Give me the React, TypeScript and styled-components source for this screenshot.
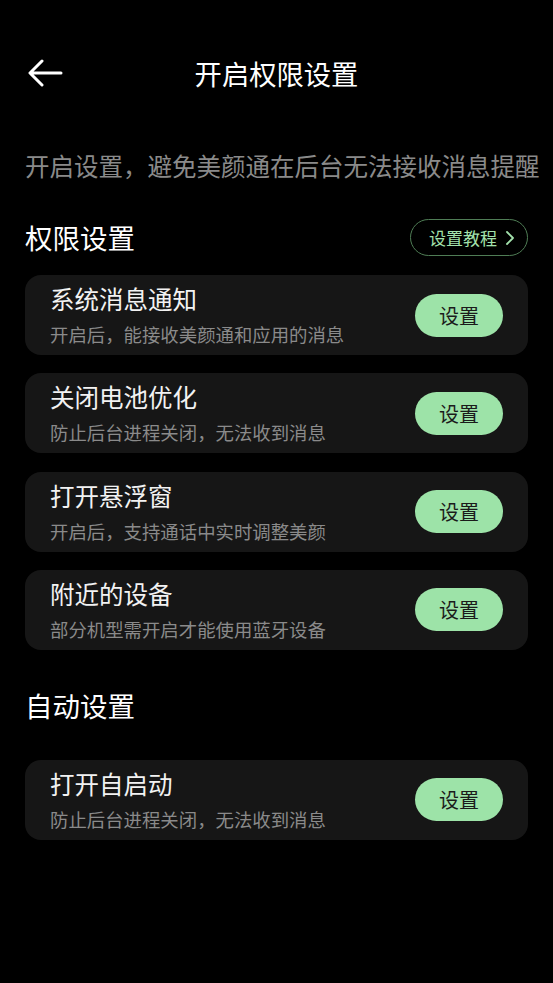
import React from "react";
import styled, { createGlobalStyle } from "styled-components";

const GlobalStyle = createGlobalStyle`
  html, body { margin: 0; padding: 0; background: #000; }
  body { font-family: "Noto Sans CJK SC", "Noto Sans", sans-serif; }
`;

const Page = styled.div`
  width: 553px;
  min-height: 983px;
  background: #000;
  display: flex;
  flex-direction: column;
  padding: 40px 25px 0;
  box-sizing: border-box;
`;

const NavBar = styled.div`
  height: 66px;
  position: relative;
  display: flex;
  align-items: center;
  justify-content: center;
`;

const BackButton = styled.button`
  position: absolute;
  left: 2px;
  top: 50%;
  transform: translateY(-50%);
  background: none;
  border: none;
  padding: 0;
  display: flex;
  width: 36px;
  height: 28px;
`;

const Title = styled.h1`
  margin: 0;
  font-size: 27.3px;
  font-weight: 400;
  color: #fff;
  line-height: 36px;
`;

const Intro = styled.p`
  margin: 43px 0 0;
  font-size: 24.5px;
  line-height: 34px;
  color: #8a8a8a;
  white-space: nowrap;
`;

const SectionRow = styled.div<{ $mt: number }>`
  margin-top: ${(p) => p.$mt}px;
  height: 37px;
  display: flex;
  align-items: center;
  justify-content: space-between;
`;

const SectionTitle = styled.h2`
  margin: 0;
  font-size: 27.5px;
  font-weight: 400;
  color: #fff;
  line-height: 37px;
`;

const TutorialButton = styled.button`
  height: 37px;
  box-sizing: border-box;
  border: 1px solid #4f7d55;
  border-radius: 19px;
  background: transparent;
  color: #a3e2ac;
  font-family: inherit;
  font-size: 17px;
  padding: 0 12px 0 18px;
  display: flex;
  align-items: center;
  gap: 8px;
`;

const CardList = styled.div<{ $mt: number }>`
  margin-top: ${(p) => p.$mt}px;
  display: flex;
  flex-direction: column;
  gap: 18.3px;
`;

const Card = styled.div`
  height: 80px;
  box-sizing: border-box;
  background: #161616;
  border-radius: 16px;
  padding: 9px 25px;
  display: flex;
  align-items: center;
  justify-content: space-between;
`;

const CardText = styled.div`
  display: flex;
  flex-direction: column;
  gap: 8px;
`;

const CardTitle = styled.div`
  font-size: 24.5px;
  line-height: 30px;
  color: #f2f2f2;
`;

const CardDesc = styled.div`
  font-size: 18.4px;
  line-height: 24px;
  color: #8a8a8a;
`;

const SetButton = styled.button`
  width: 88px;
  height: 43px;
  border: none;
  border-radius: 22px;
  background: #9de3a8;
  color: #1b1b1b;
  font-family: inherit;
  font-size: 20px;
  padding: 0;
`;

const items = [
  { t: "系统消息通知", d: "开启后，能接收美颜通和应用的消息" },
  { t: "关闭电池优化", d: "防止后台进程关闭，无法收到消息" },
  { t: "打开悬浮窗", d: "开启后，支持通话中实时调整美颜" },
  { t: "附近的设备", d: "部分机型需开启才能使用蓝牙设备" },
];

const auto = [{ t: "打开自启动", d: "防止后台进程关闭，无法收到消息" }];

const Row = ({ t, d }: { t: string; d: string }) => (
  <Card>
    <CardText>
      <CardTitle>{t}</CardTitle>
      <CardDesc>{d}</CardDesc>
    </CardText>
    <SetButton>设置</SetButton>
  </Card>
);

export default function App() {
  return (
    <>
      <GlobalStyle />
      <Page>
        <NavBar>
          <BackButton aria-label="返回">
            <svg width="36" height="28" viewBox="0 0 36 28" fill="none">
              <path
                d="M34 14H4M15 2L3 14l12 12"
                stroke="#fff"
                strokeWidth="3"
                strokeLinecap="round"
                strokeLinejoin="round"
              />
            </svg>
          </BackButton>
          <Title>开启权限设置</Title>
        </NavBar>
        <Intro>开启设置，避免美颜通在后台无法接收消息提醒</Intro>
        <SectionRow $mt={36}>
          <SectionTitle>权限设置</SectionTitle>
          <TutorialButton>
            设置教程
            <svg width="10" height="16" viewBox="0 0 10 16" fill="none">
              <path
                d="M2 2l6 6-6 6"
                stroke="#a3e2ac"
                strokeWidth="1.8"
                strokeLinecap="round"
                strokeLinejoin="round"
              />
            </svg>
          </TutorialButton>
        </SectionRow>
        <CardList $mt={19}>
          {items.map((it) => (
            <Row key={it.t} {...it} />
          ))}
        </CardList>
        <SectionRow $mt={37}>
          <SectionTitle>自动设置</SectionTitle>
        </SectionRow>
        <CardList $mt={36}>
          {auto.map((it) => (
            <Row key={it.t} {...it} />
          ))}
        </CardList>
      </Page>
    </>
  );
}
